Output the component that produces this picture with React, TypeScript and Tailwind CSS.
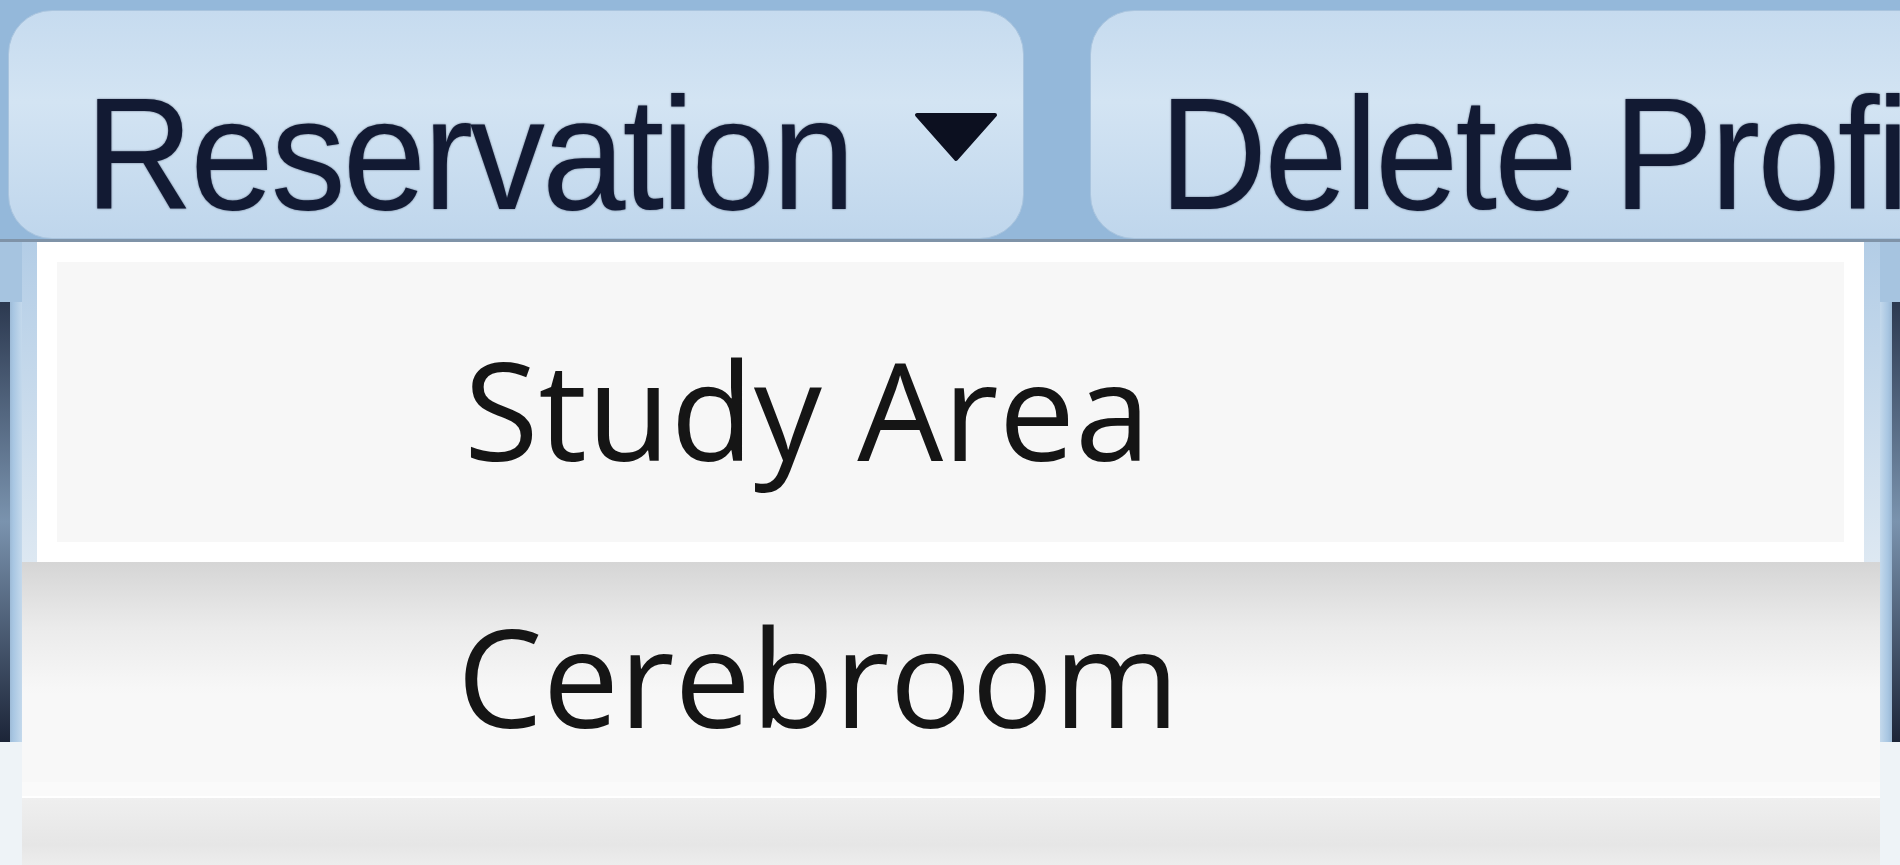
export default function App() {
  return (
    <div className="w-[1900px] h-[865px] overflow-hidden bg-[#94b8da] flex flex-col">
      {/* toolbar buttons */}
      <div className="flex items-start pt-[10px] pl-[8px] h-[242px] shrink-0 border-b-[3px] border-[#7f93a8]">
        <div className="w-[1016px] h-[229px] shrink-0 rounded-[44px] bg-[linear-gradient(to_bottom,#c6dbef,#d3e4f3_40%,#bfd6ec)] border border-[#a9c4de] flex items-center pl-[76px] pt-[58px]">
          <span className="font-['Liberation_Sans',Arial,sans-serif] text-[150px] leading-none text-[#121a33] tracking-[-3px] scale-y-[1.06] [text-shadow:0_0_2px_rgba(18,26,51,0.6)]">
            Reservation
          </span>
          <svg className="ml-[62px] mt-[-34px]" width="84" height="50" viewBox="0 0 84 50">
            <polygon points="3,3 81,3 42,47" fill="#0c1020" stroke="#0c1020" strokeWidth="4" strokeLinejoin="round" />
          </svg>
        </div>
        <div className="ml-[66px] w-[900px] h-[229px] shrink-0 rounded-l-[44px] bg-[linear-gradient(to_bottom,#c6dbef,#d3e4f3_40%,#bfd6ec)] border border-[#a9c4de] flex items-center pl-[68px] pt-[58px]">
          <span className="font-['Liberation_Sans',Arial,sans-serif] text-[150px] leading-none text-[#121a33] tracking-[-3px] whitespace-nowrap scale-y-[1.06] [text-shadow:0_0_2px_rgba(18,26,51,0.6)]">
            Delete Profi
          </span>
        </div>
      </div>

      {/* dropdown menu */}
      <div className="flex flex-1">
        <div className="w-[22px] shrink-0 bg-[linear-gradient(to_right,#7d97b3,#a8c6e2_60%,#c4d9ec)] flex flex-col">
          <div className="h-[60px] bg-[#a6c4e0]" />
          <div className="h-[440px] w-[10px] bg-[linear-gradient(to_bottom,#2c3950,#7a93ae_50%,#1c2538)]" />
          <div className="flex-1 bg-[#eef3f7]" />
        </div>

        <div className="flex-1 flex flex-col bg-[#f6f6f6] font-['Open_Sans','Noto_Sans',sans-serif] text-[#151515]">
          <div className="flex h-[320px]">
            <div className="w-[15px] bg-[linear-gradient(to_bottom,#b3cde6,#dde8f2)]" />
            <div className="flex-1 border-[20px] border-white bg-[#f7f7f7] flex items-center pl-[407px] pt-[14px]">
              <span className="text-[136px] leading-none tracking-[0px] font-medium">Study Area</span>
            </div>
            <div className="w-[16px] bg-[linear-gradient(to_bottom,#b3cde6,#dde8f2)]" />
          </div>
          <div className="h-[220px] px-[15px] bg-[linear-gradient(to_bottom,#d5d5d5,#ebebeb_30%,#f8f8f8_60%)]">
            <div className="h-full flex items-center pl-[420px] pt-[8px]">
              <span className="text-[136px] leading-none tracking-[0px] font-medium">Cerebroom</span>
            </div>
          </div>
          <div className="h-[14px] bg-[#fafafa]" />
          <div className="h-[2px] bg-white" />
          <div className="flex-1 bg-[linear-gradient(to_bottom,#efefef,#e6e6e6_70%,#ededed)]" />
        </div>

        <div className="w-[20px] shrink-0 bg-[linear-gradient(to_right,#c4d9ec,#a8c6e2_40%,#7d97b3)] flex flex-col items-end">
          <div className="h-[60px] w-full bg-[#a6c4e0]" />
          <div className="h-[440px] w-[8px] bg-[linear-gradient(to_bottom,#2c3950,#7a93ae_50%,#1c2538)]" />
          <div className="flex-1 w-full bg-[#eef3f7]" />
        </div>
      </div>
    </div>
  );
}
